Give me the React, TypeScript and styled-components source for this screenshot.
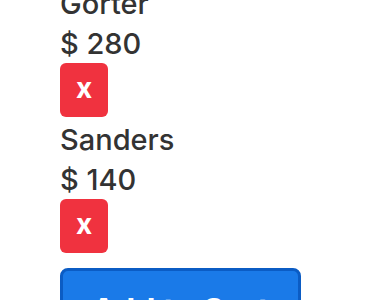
import React from 'react';
import styled, { createGlobalStyle } from 'styled-components';

const GlobalStyle = createGlobalStyle`
  html, body {
    margin: 0;
    padding: 0;
    background: #ffffff;
  }
  body {
    font-family: Inter, 'Liberation Sans', sans-serif;
    color: #333333;
  }
`;

const Cart = styled.div`
  display: flex;
  flex-direction: column;
  align-items: flex-start;
  padding: 0 60px;
  margin-top: -19px;
`;

const Item = styled.div`
  display: flex;
  flex-direction: column;
  align-items: flex-start;
`;

const Name = styled.div`
  font-size: 29px;
  font-weight: 500;
  line-height: 40px;
  height: 37px;
  padding-top: 3px;
`;

const Price = styled(Name)``;

const RemoveButton = styled.button`
  margin-top: 2px;
  width: 48px;
  height: 54px;
  border: none;
  border-radius: 6px;
  background: #f0323f;
  color: #ffffff;
  font-family: Inter, 'Liberation Sans', sans-serif;
  font-size: 28px;
  font-weight: 700;
  line-height: 1;
  padding: 0 0 4px;
  cursor: pointer;
`;

const AddButton = styled.button`
  margin-top: 15px;
  width: 241px;
  height: 64px;
  border: 3px solid #0b5cc4;
  border-radius: 8px;
  background: #1a7ae8;
  color: #ffffff;
  font-family: Inter, 'Liberation Sans', sans-serif;
  font-size: 32px;
  font-weight: 700;
  padding: 22px 0 0;
  line-height: 36px;
  text-align: center;
  cursor: pointer;
`;

const items = [
  { name: 'Gorter', price: 280 },
  { name: 'Sanders', price: 140 },
];

export default function App() {
  return (
    <>
      <GlobalStyle />
      <Cart>
        {items.map((item) => (
          <Item key={item.name}>
            <Name>{item.name}</Name>
            <Price>$ {item.price}</Price>
            <RemoveButton>x</RemoveButton>
          </Item>
        ))}
        <AddButton>Add to Cart</AddButton>
      </Cart>
    </>
  );
}
